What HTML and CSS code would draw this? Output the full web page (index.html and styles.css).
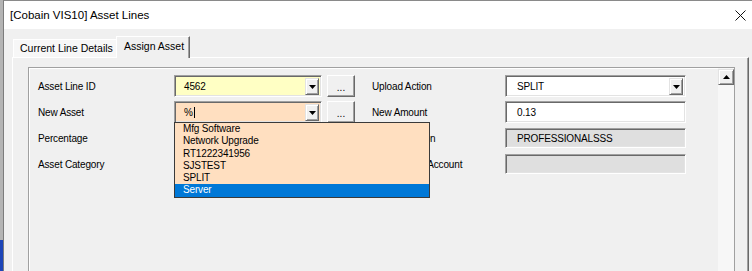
FILE: index.html
```html
<!DOCTYPE html>
<html>
<head>
<meta charset="utf-8">
<link rel="stylesheet" href="styles.css">
</head>
<body>
<div class="window">
  <div class="titlebar">
    <span class="title">[Cobain VIS10] Asset Lines</span>
    <svg class="close" width="11" height="11" viewBox="0 0 11 11"><path d="M0.5 0.5 L10.5 10.5 M10.5 0.5 L0.5 10.5" stroke="#111" stroke-width="1" fill="none"/></svg>
  </div>
  <div class="client">
    <div class="tabs">
      <div class="tab">Current Line Details</div>
      <div class="tab active">Assign Asset</div>
    </div>
    <div class="page">
      <div class="frame">
        <div class="form">
          <div class="label">Asset Line ID</div>
          <div class="combo yellow"><span class="val">4562</span><span class="ddbtn"><svg width="7" height="4" viewBox="0 0 7 4"><path d="M0 0 H7 L3.5 4 Z" fill="#000"/></svg></span></div>
          <div class="cell"><span class="dots">...</span></div>
          <div class="label right">Upload Action</div>
          <div class="combo white"><span class="val">SPLIT</span><span class="ddbtn"><svg width="7" height="4" viewBox="0 0 7 4"><path d="M0 0 H7 L3.5 4 Z" fill="#000"/></svg></span></div>

          <div class="label">New Asset</div>
          <div class="combo peach"><span class="val">%<span class="caret"></span></span><span class="ddbtn"><svg width="7" height="4" viewBox="0 0 7 4"><path d="M0 0 H7 L3.5 4 Z" fill="#000"/></svg></span>
            <ul class="droplist">
              <li>Mfg Software</li>
              <li>Network Upgrade</li>
              <li>RT1222341956</li>
              <li>SJSTEST</li>
              <li>SPLIT</li>
              <li class="sel">Server</li>
            </ul>
          </div>
          <div class="cell"><span class="dots">...</span></div>
          <div class="label right">New Amount</div>
          <div class="field white"><span class="val">0.13</span></div>

          <div class="label">Percentage</div>
          <div class="empty"></div>
          <div class="empty"></div>
          <div class="label right">Asset Location</div>
          <div class="field gray"><span class="val">PROFESSIONALSSS</span></div>

          <div class="label">Asset Category</div>
          <div class="empty"></div>
          <div class="empty"></div>
          <div class="label right">Expense GL Account</div>
          <div class="field gray"></div>
        </div>
        <div class="vscroll">
          <div class="sbtn"><svg width="7" height="4" viewBox="0 0 7 4"><path d="M0 4 H7 L3.5 0 Z" fill="#000"/></svg></div>
        </div>
      </div>
    </div>
  </div>
</div>
</body>
</html>
```
FILE: styles.css
```css
* { box-sizing: border-box; }
html, body { margin: 0; padding: 0; }
body {
  width: 752px;
  height: 271px;
  overflow: hidden;
  background: linear-gradient(to bottom, #b4b4b4 0, #b4b4b4 240px, #1d45b8 240px);
  font-family: "Liberation Sans", Arial, sans-serif;
}
.window {
  margin-left: 3px;
  border-left: 1px solid #7c7c7c;
  border-top: 1px solid #8a8a8a;
  height: 400px;
  background: #f0f0f0;
}
.titlebar {
  height: 28px;
  background: #fff;
  display: flex;
  align-items: center;
  justify-content: space-between;
  padding: 0 6px 0 6px;
}
.title {
  font-size: 11.5px;
  color: #000;
}
.close { display: block; margin-top: 1px; }
.client { background: #f0f0f0; }
.tabs {
  height: 28px;
  display: flex;
  align-items: flex-end;
  padding-left: 9px;
  position: relative;
  z-index: 1;
}
.tab {
  height: 18px;
  width: 103px;
  padding-left: 6px;
  font-size: 10.5px;
  line-height: 17px;
  color: #000;
  background: #f7f7f7;
  border-top: 1px solid #fff;
  border-left: 1px solid #fff;
}
.tab.active {
  height: 22px;
  width: 74px;
  margin-bottom: -1px;
  padding-left: 7px;
  line-height: 18px;
  background: #f0f0f0;
  border-right: 1px solid #696969;
  box-shadow: inset -1px 0 0 #a0a0a0;
}
.page {
  margin: 0 3px 0 8px;
  border-top: 1px solid #fff;
  border-left: 1px solid #fff;
  border-right: 1px solid #696969;
  box-shadow: inset -1px 0 0 #a0a0a0;
  padding: 9px 13px 0 15px;
  height: 300px;
}
.frame {
  border: 1px solid #a0a0a0;
  box-shadow: inset 1px 1px 0 #fff;
  height: 260px;
  display: flex;
}
.form {
  flex: 1;
  padding: 7px 0 0 9px;
  display: grid;
  grid-template-columns: 136px 148px 33px 150px 181px;
  grid-auto-rows: 22px;
  row-gap: 4px;
  align-content: start;
  font-size: 10px;
  letter-spacing: -0.15px;
  color: #000;
}
.label {
  display: flex;
  align-items: center;
  padding-top: 1px;
  white-space: nowrap;
}
.label.right { padding-left: 17px; }
.combo, .field {
  position: relative;
  display: flex;
  align-items: center;
  border-top: 1px solid #a0a0a0;
  border-left: 1px solid #a0a0a0;
  border-bottom: 1px solid #fff;
  border-right: 1px solid #fff;
  box-shadow: inset 1px 1px 0 #696969, inset -1px -1px 0 #e3e3e3;
}
.combo.yellow { background: #ffffc4; }
.combo.peach { background: #ffdfc0; }
.combo.white, .field.white { background: #fff; }
.field.gray {
  background: #dfdfdf;
  height: 20px;
  margin-top: 1px;
}
.val {
  flex: 1;
  padding-left: 9px;
  white-space: nowrap;
}
.combo.white .val, .field .val { padding-left: 11px; }
.caret {
  display: inline-block;
  width: 1px;
  height: 11px;
  background: #000;
  vertical-align: -2px;
  margin-left: 1px;
}
.ddbtn {
  width: 14px;
  height: 17px;
  margin-right: 2px;
  display: flex;
  align-items: center;
  justify-content: center;
  background: #f0f0f0;
  border-top: 1px solid #e3e3e3;
  border-left: 1px solid #e3e3e3;
  border-bottom: 1px solid #696969;
  border-right: 1px solid #696969;
  box-shadow: inset 1px 1px 0 #fff, inset -1px -1px 0 #a0a0a0;
}
.ddbtn svg { display: block; margin-top: 1px; }
.cell { padding-left: 5px; }
.dots {
  display: flex;
  align-items: flex-end;
  justify-content: center;
  height: 22px;
  width: 28px;
  padding-bottom: 3px;
  font-size: 10px;
  letter-spacing: 0;
  background: #f0f0f0;
  border-top: 1px solid #fff;
  border-left: 1px solid #fff;
  border-bottom: 1px solid #696969;
  border-right: 1px solid #696969;
  box-shadow: inset -1px -1px 0 #a0a0a0;
}
.droplist {
  position: absolute;
  left: -1px;
  top: 20px;
  width: 256px;
  margin: 0;
  padding: 0;
  list-style: none;
  background: #ffdfc0;
  border: 1px solid #3a3a3a;
  z-index: 5;
}
.droplist li {
  height: 12.3px;
  line-height: 12.3px;
  padding-left: 8px;
  color: #000;
}
.droplist li.sel {
  background: #0078d7;
  color: #fff;
}
.vscroll {
  width: 16px;
  background: #f7f7f7;
  padding-top: 1px;
}
.sbtn {
  width: 16px;
  height: 16px;
  display: flex;
  align-items: center;
  justify-content: center;
  background: #f0f0f0;
  border-top: 1px solid #e3e3e3;
  border-left: 1px solid #e3e3e3;
  border-bottom: 1px solid #696969;
  border-right: 1px solid #696969;
  box-shadow: inset 1px 1px 0 #fff, inset -1px -1px 0 #a0a0a0;
}
.sbtn svg { display: block; }
```
